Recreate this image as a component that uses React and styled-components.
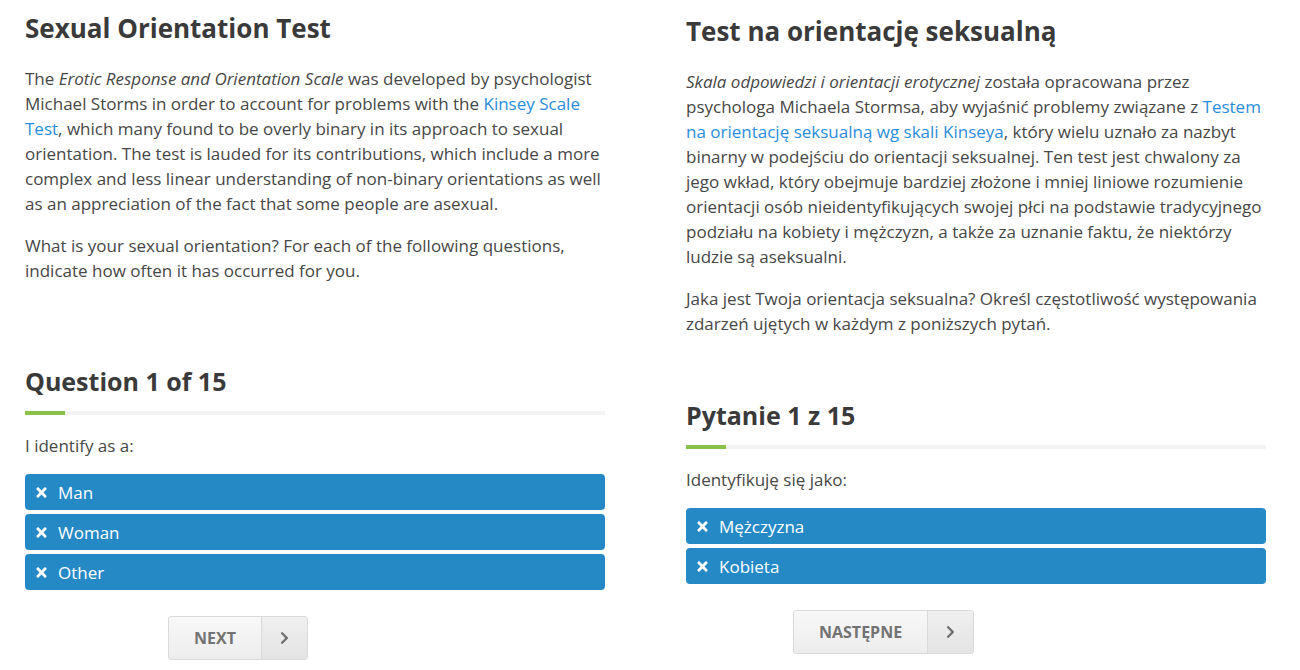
import React from 'react';
import styled, { createGlobalStyle } from 'styled-components';
import { FaTimes, FaChevronRight } from 'react-icons/fa';

const GlobalStyle = createGlobalStyle`
  html, body {
    margin: 0;
    padding: 0;
    background: #fff;
  }
  body {
    font-family: "Open Sans", "Liberation Sans", sans-serif;
    color: #474747;
    -webkit-font-smoothing: antialiased;
  }
`;

const Page = styled.div`
  display: flex;
  align-items: flex-start;
  gap: 81px;
  padding-left: 25px;
  width: 1300px;
  box-sizing: border-box;
`;

const Panel = styled.section`
  width: 580px;
  padding-top: ${(p) => p.$top}px;
`;

const Title = styled.h1`
  margin: 0 0 22px;
  font-size: 26px;
  line-height: 32px;
  font-weight: 700;
  color: #3a3a3a;
`;

const Text = styled.p`
  margin: 0 0 17px;
  font-size: 17px;
  line-height: 25px;
  color: #474747;

  em {
    font-style: italic;
  }
`;

const Link = styled.a`
  color: #2b8ddb;
  text-decoration: none;
`;

const Quiz = styled.div`
  margin-top: ${(p) => p.$gap}px;
`;

const Question = styled.h2`
  margin: 0 0 14px;
  font-size: 25px;
  line-height: 31px;
  font-weight: 700;
  color: #3a3a3a;
`;

const Progress = styled.div`
  height: 4px;
  background: #f3f3f3;
  margin-bottom: 18px;

  span {
    display: block;
    height: 100%;
    width: 40px;
    background: #8bc34a;
  }
`;

const Prompt = styled.div`
  font-size: 17px;
  line-height: 25px;
  color: #474747;
  margin-bottom: 16px;
`;

const Options = styled.div`
  display: flex;
  flex-direction: column;
  gap: 4px;
`;

const Option = styled.div`
  display: flex;
  align-items: center;
  gap: 11px;
  height: 36px;
  padding: 0 11px;
  border-radius: 4px;
  background: #2589c6;
  color: #fff;
  font-size: 17px;

  svg {
    width: 11px;
    height: 15px;
  }
`;

const NextButton = styled.div`
  display: inline-flex;
  margin: 26px 0 0 ${(p) => p.$offset}px;
  height: 44px;
  box-sizing: border-box;
  border: 1px solid #dadada;
  border-radius: 3px;
  overflow: hidden;
  background: linear-gradient(#f8f8f8, #ededed);
`;

const NextLabel = styled.span`
  display: flex;
  align-items: center;
  padding: 0 25px;
  font-size: 16px;
  font-weight: 700;
  text-transform: uppercase;
  color: #737373;
`;

const NextArrow = styled.span`
  display: flex;
  align-items: center;
  justify-content: center;
  width: 45px;
  border-left: 1px solid #dadada;
  background: linear-gradient(#efefef, #e4e4e4);
  color: #6e6e6e;

  svg {
    width: 9px;
    height: 14px;
  }
`;

function QuizBlock({ gap, heading, prompt, options, next, offset }) {
  return (
    <Quiz $gap={gap}>
      <Question>{heading}</Question>
      <Progress>
        <span />
      </Progress>
      <Prompt>{prompt}</Prompt>
      <Options>
        {options.map((o) => (
          <Option key={o}>
            <FaTimes />
            {o}
          </Option>
        ))}
      </Options>
      <NextButton $offset={offset}>
        <NextLabel>{next}</NextLabel>
        <NextArrow>
          <FaChevronRight />
        </NextArrow>
      </NextButton>
    </Quiz>
  );
}

export default function App() {
  return (
    <>
      <GlobalStyle />
      <Page>
        <Panel $top={12}>
          <Title>Sexual Orientation Test</Title>
          <Text>
            The <em>Erotic Response and Orientation Scale</em> was developed by psychologist
            Michael Storms in order to account for problems with the{' '}
            <Link href="#">Kinsey Scale Test</Link>, which many found to be overly binary in its
            approach to sexual orientation. The test is lauded for its contributions, which
            include a more complex and less linear understanding of non-binary orientations as
            well as an appreciation of the fact that some people are asexual.
          </Text>
          <Text>
            What is your sexual orientation? For each of the following questions, indicate how
            often it has occurred for you.
          </Text>
          <QuizBlock
            gap={83}
            heading="Question 1 of 15"
            prompt="I identify as a:"
            options={['Man', 'Woman', 'Other']}
            next="Next"
            offset={143}
          />
        </Panel>
        <Panel $top={15}>
          <Title>Test na orientację seksualną</Title>
          <Text>
            <em>Skala odpowiedzi i orientacji erotycznej</em> została opracowana przez psychologa
            Michaela Stormsa, aby wyjaśnić problemy związane z{' '}
            <Link href="#">Testem na orientację seksualną wg skali Kinseya</Link>, który wielu
            uznało za nazbyt binarny w podejściu do orientacji seksualnej. Ten test jest chwalony
            za jego wkład, który obejmuje bardziej złożone i mniej liniowe rozumienie orientacji
            osób nieidentyfikujących swojej płci na podstawie tradycyjnego podziału na kobiety i
            mężczyzn, a także za uznanie faktu, że niektórzy ludzie są aseksualni.
          </Text>
          <Text>
            Jaka jest Twoja orientacja seksualna? Określ częstotliwość występowania zdarzeń
            ujętych w każdym z poniższych pytań.
          </Text>
          <QuizBlock
            gap={64}
            heading="Pytanie 1 z 15"
            prompt="Identyfikuję się jako:"
            options={['Mężczyzna', 'Kobieta']}
            next="Następne"
            offset={107}
          />
        </Panel>
      </Page>
    </>
  );
}
